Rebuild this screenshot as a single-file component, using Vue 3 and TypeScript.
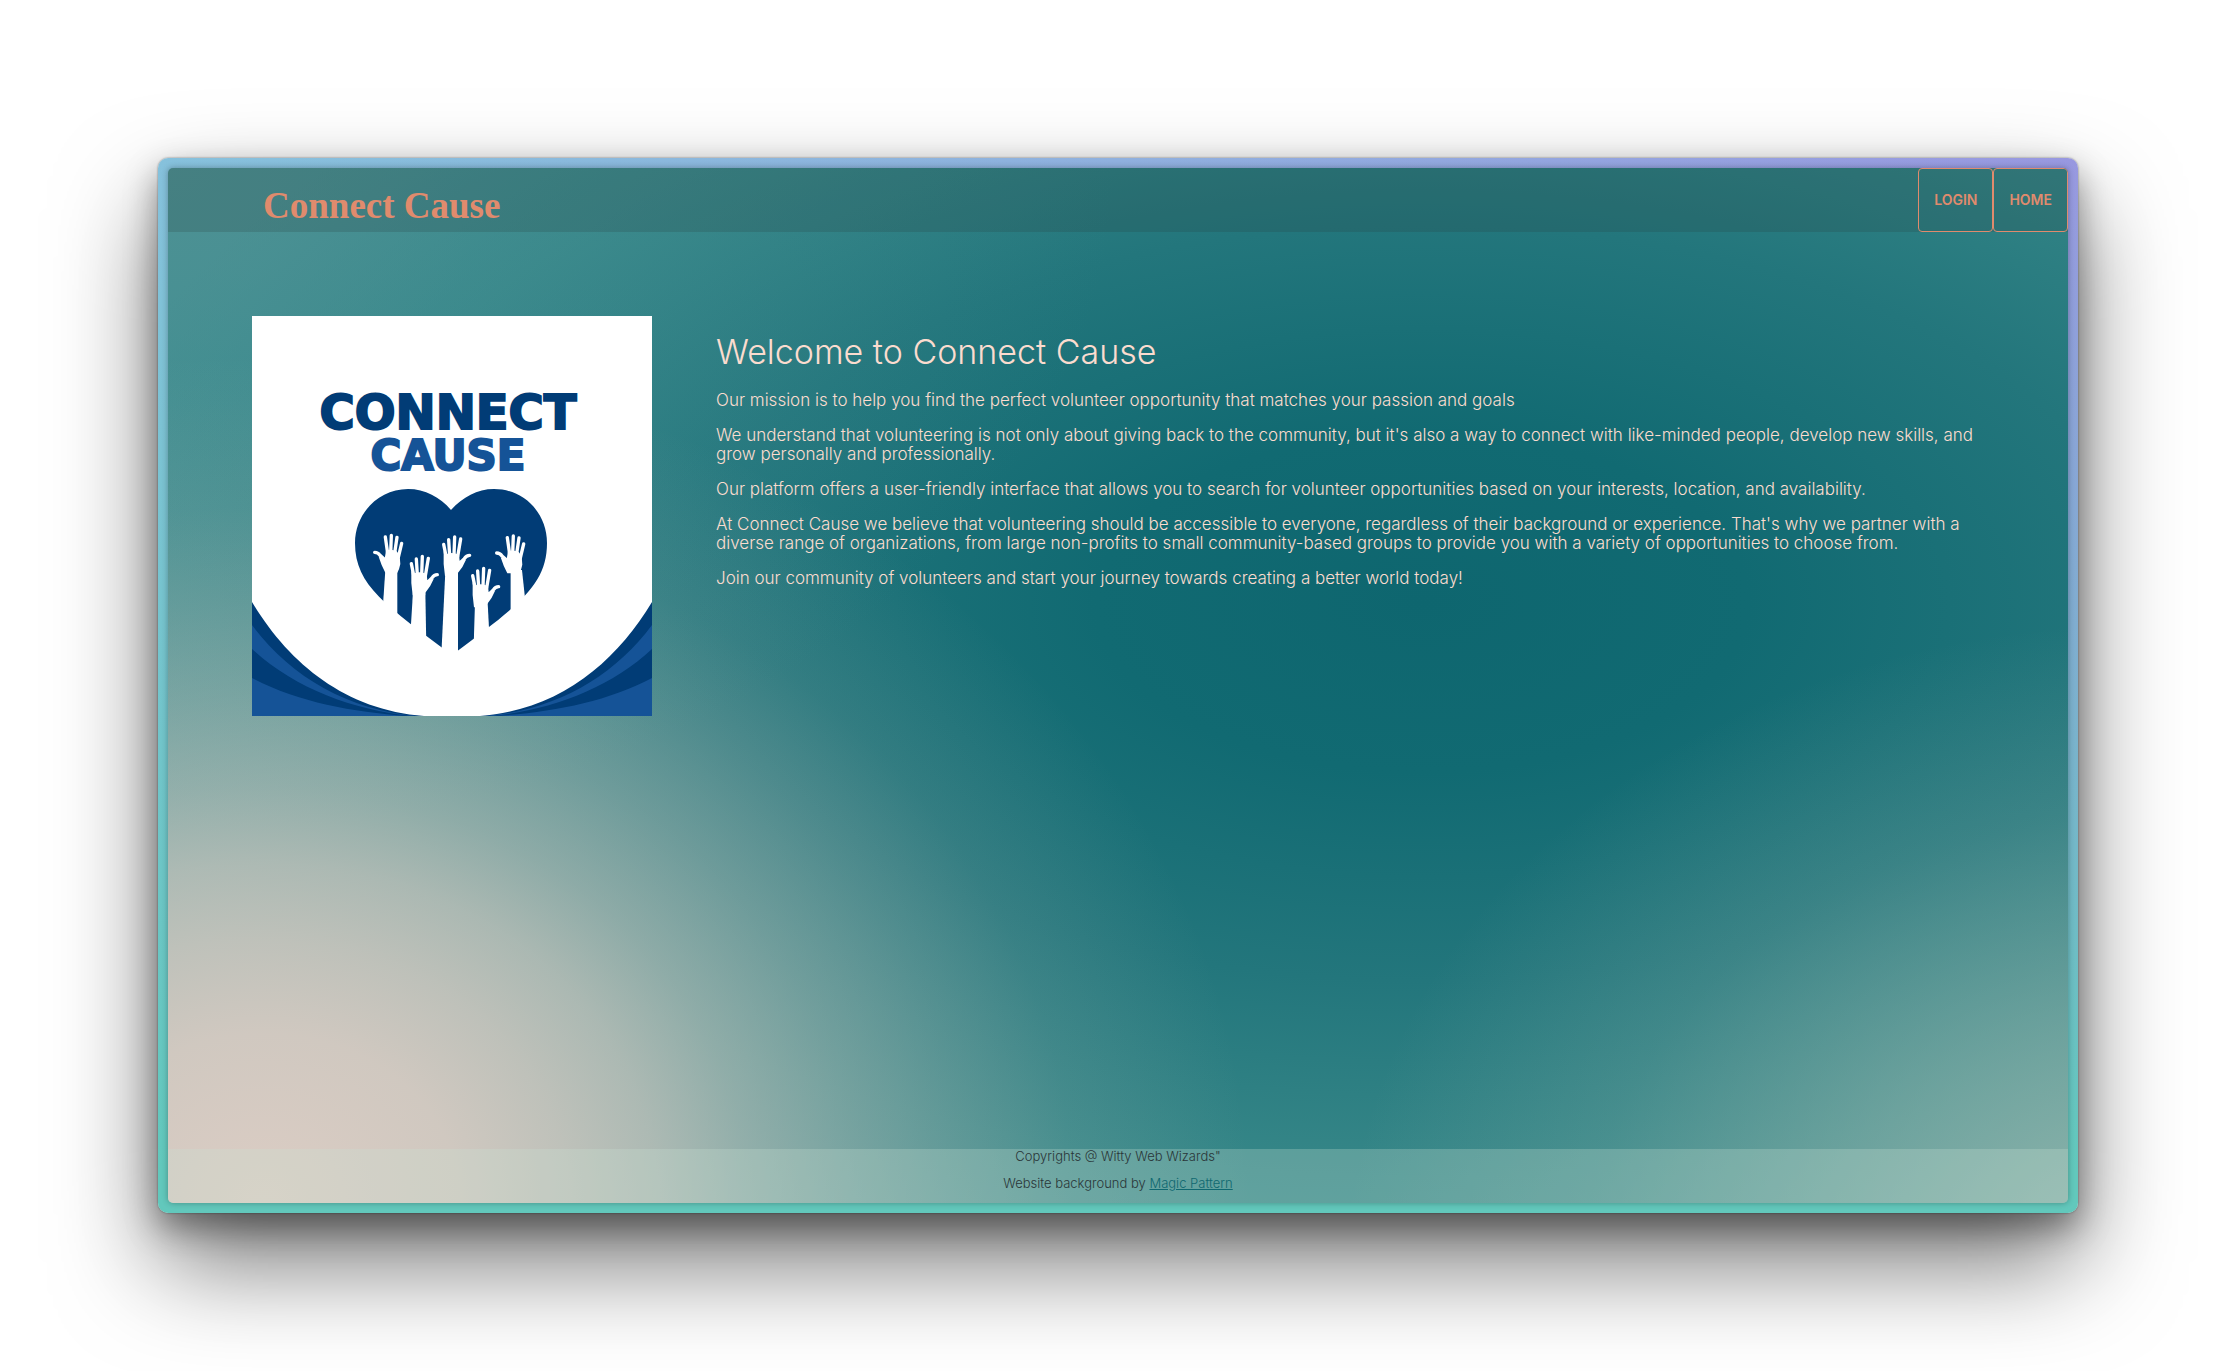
<script setup lang="ts">
interface Arm {
  hand: string
  x: number
  y: number
  path: string
}

const navItems: string[] = ['Login', 'Home']

const paragraphs: string[] = [
  'Our mission is to help you find the perfect volunteer opportunity that matches your passion and goals',
  "We understand that volunteering is not only about giving back to the community, but it's also a way to connect with like-minded people, develop new skills, and grow personally and professionally.",
  'Our platform offers a user-friendly interface that allows you to search for volunteer opportunities based on your interests, location, and availability.',
  "At Connect Cause we believe that volunteering should be accessible to everyone, regardless of their background or experience. That's why we partner with a diverse range of organizations, from large non-profits to small community-based groups to provide you with a variety of opportunities to choose from.",
  'Join our community of volunteers and start your journey towards creating a better world today!',
]

const arms: Arm[] = [
  { hand: '#hand-left', x: 0, y: 0, path: 'M136 300 L172 300 V450 L126 450 Z' },
  { hand: '#hand-right', x: 0, y: 0, path: 'M219 364 H256 L259 530 L209 530 Z' },
  { hand: '#hand-right', x: 97, y: -58, path: 'M316 305 H354 V575 H303 Z' },
  { hand: '#hand-right', x: 184, y: 36, path: 'M405 398 H443 L450 530 H401 Z' },
  { hand: '#hand-left', x: 366, y: 2, path: 'M512 300 H546 L560 430 L512 440 Z' },
]
</script>

<template>
  <div class="page">
    <div class="frame">
      <div class="screen">
        <header class="bar">
          <a class="brand" href="#">Connect Cause</a>
          <nav class="nav">
            <button v-for="item in navItems" :key="item" type="button">{{ item }}</button>
          </nav>
        </header>

        <main class="content">
          <svg class="logo" viewBox="0 0 400 400" role="img" aria-label="Connect Cause logo">
            <defs>
              <g id="swoosh">
                <path fill="#013c76" d="M0 286 C36 346 92 394 172 400 H0 Z" />
                <path fill="#155397" d="M0 309 C38 360 95 394 166 400 H0 Z" />
                <path fill="#013c76" d="M0 333 C42 372 100 394 160 400 H0 Z" />
                <path fill="#155397" d="M0 362 C45 386 100 396 155 400 H0 Z" />
              </g>
              <g id="hand-left">
                <path class="finger" d="M136 201 L143 250 M154 196 L152 250 M171 202 L164 250 M185 220 L175 262" />
                <path class="finger" d="M104 247 Q114 247 120 256 L138 272" />
                <path fill="#fff" d="M138 242 Q154 236 170 244 L179 256 L181 282 Q178 298 172 308 H136 Q124 286 116 260 L134 266 Z" />
              </g>
              <g id="hand-right">
                <path class="finger" d="M214 281 L223 325 M229 267 L232 315 M247 259 L245 315 M265 265 L256 318" />
                <path class="finger" d="M292 314 Q282 314 276 324 L262 338" />
                <path fill="#fff" d="M218 312 Q238 302 260 312 L262 330 L281 327 Q272 350 256 368 V376 H218 Q212 340 214 300 Z" />
              </g>
            </defs>
            <rect width="400" height="400" fill="#fff" />
            <use href="#swoosh" />
            <use href="#swoosh" transform="translate(400 0) scale(-1 1)" />
            <text class="logo-top" x="196" y="113">CONNECT</text>
            <text class="logo-bottom" x="196" y="154">CAUSE</text>
            <path
              fill="#013c76"
              d="M199 194 C188 181 173 173 156 173 C127 173 103 197 103 227 C103 270 135 290 200 339 C265 290 295 270 295 227 C295 197 272 173 242 173 C225 173 211 181 199 194 Z"
            />
            <g transform="translate(88 154) scale(0.3333)">
              <g v-for="(arm, i) in arms" :key="i">
                <use :href="arm.hand" :x="arm.x" :y="arm.y" />
                <path fill="#fff" :d="arm.path" />
              </g>
            </g>
          </svg>

          <section class="intro">
            <h1>Welcome to Connect Cause</h1>
            <p v-for="text in paragraphs" :key="text">{{ text }}</p>
          </section>
        </main>

        <footer class="footer">
          <p>Copyrights @ Witty Web Wizards"</p>
          <p>Website background by <a href="#">Magic Pattern</a></p>
        </footer>
      </div>
    </div>
  </div>
</template>

<style>
body {
  margin: 0;
  background: #fff;
}
</style>

<style scoped>
.page {
  box-sizing: border-box;
  min-height: 100vh;
  padding: 158px;
  display: flex;
  overflow: hidden;
  font-family: Inter, 'Liberation Sans', sans-serif;
}

.frame {
  flex: 1;
  display: flex;
  padding: 10px;
  border-radius: 10px;
  background:
    linear-gradient(to bottom, rgba(98, 200, 188, 0) 0%, rgba(98, 200, 188, 0.5) 50%, #62c8bc 96%),
    linear-gradient(to right, #86c1dc, #8fb0de 50%, #9898e0);
  box-shadow:
    0 0 2px rgba(0, 0, 0, 0.5),
    0 14px 32px rgba(0, 0, 0, 0.38),
    0 50px 100px rgba(0, 0, 0, 0.54);
}

.screen {
  flex: 1;
  min-width: 0;
  display: flex;
  flex-direction: column;
  border-radius: 5px;
  overflow: hidden;
  box-shadow: 0 0 6px rgba(0, 0, 0, 0.3);
  background:
    radial-gradient(
      ellipse 52% 82% at 5% 100%,
      rgba(220, 205, 196, 1) 0%,
      rgba(220, 205, 196, 0.92) 20%,
      rgba(220, 205, 196, 0.81) 31%,
      rgba(220, 205, 196, 0.7) 40%,
      rgba(220, 205, 196, 0.54) 49%,
      rgba(220, 205, 196, 0.38) 60%,
      rgba(220, 205, 196, 0.24) 71%,
      rgba(220, 205, 196, 0.11) 82%,
      rgba(220, 205, 196, 0) 100%
    ),
    radial-gradient(
      ellipse 42% 62% at 104% 106%,
      rgba(157, 187, 177, 0.92) 0%,
      rgba(157, 187, 177, 0.52) 40%,
      rgba(157, 187, 177, 0.2) 70%,
      rgba(157, 187, 177, 0) 100%
    ),
    radial-gradient(ellipse 50% 65% at 0% 0%, rgba(86, 146, 150, 0.6) 0%, rgba(76, 145, 152, 0.3) 35%, rgba(60, 140, 145, 0) 100%),
    radial-gradient(ellipse 66% 63% at 66% 42%, #0e666f 0%, #116a72 26%, #23767c 58%, #368788 88%, #418f90 110%);
}

.bar {
  display: flex;
  justify-content: space-between;
  align-items: stretch;
  height: 64px;
  background: rgba(40, 60, 62, 0.2);
}

.brand {
  padding-left: 95px;
  padding-top: 6px;
  font: 700 37px/64px 'Liberation Serif', serif;
  color: #e08b6d;
  text-decoration: none;
}

.nav {
  display: flex;
}

.nav button {
  padding: 0 15px;
  border: 1px solid #e08b6d;
  border-radius: 4px;
  background: transparent;
  color: #e08b6d;
  font: 600 14px/20px Inter, 'Liberation Sans', sans-serif;
  text-transform: uppercase;
}

.content {
  flex: 1;
  display: flex;
  align-items: flex-start;
  gap: 64px;
  padding: 84px 64px 84px 84px;
}

.logo {
  flex: none;
  display: block;
  width: 400px;
  height: 400px;
}

.logo-top,
.logo-bottom {
  font-family: 'DejaVu Sans', sans-serif;
  font-weight: 700;
  text-anchor: middle;
  stroke-width: 2px;
}

.logo-top {
  font-size: 48px;
  fill: #013c76;
  stroke: #013c76;
}

.logo-bottom {
  font-size: 42px;
  fill: #155397;
  stroke: #155397;
}

.finger {
  fill: none;
  stroke: #fff;
  stroke-width: 10px;
  stroke-linecap: round;
}

.intro {
  flex: 1;
  padding-top: 16px;
  color: #fbdccf;
}

.intro h1 {
  margin: 0 0 20px;
  font-size: 34px;
  line-height: 39px;
  font-weight: 300;
}

.intro p {
  margin: 0 0 16px;
  font-size: 17px;
  line-height: 19px;
  font-weight: 300;
}

.footer {
  background: rgba(201, 227, 211, 0.28);
  color: #2a3638;
  font-size: 13px;
  font-weight: 300;
  line-height: 15px;
  text-align: center;
}

.footer p {
  margin: 0 0 12px;
}

.footer a {
  color: #0f6870;
}
</style>
